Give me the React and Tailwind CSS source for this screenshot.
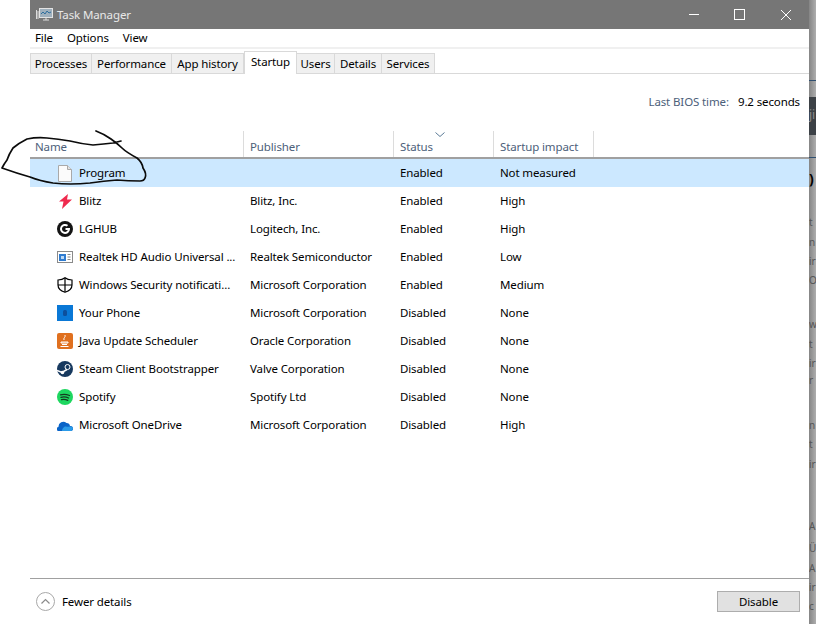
import React from "react";

const F = { fontFamily: '"Noto Sans", sans-serif' };

const Doc = () => (
  <svg width="14" height="17" viewBox="0 0 14 17"><path d="M.5.5h9l4 4v12H.5z" fill="#fbfbfb" stroke="#a9a9a9" /><path d="M9.5.5v4h4" fill="#e4e4e4" stroke="#a9a9a9" /></svg>
);
const Blitz = () => (
  <svg width="13" height="15" viewBox="0 0 13 15"><path d="M9 0 0 7.500h4.500L3 15l10-9.500H8z" fill="#ef2a4e" /></svg>
);
const Lg = () => (
  <svg width="16" height="16" viewBox="0 0 16 16"><circle cx="8" cy="8" r="8" fill="#141414" /><path d="M10.500 4.800A4 4 0 1 0 12 8H8.500" fill="none" stroke="#fff" strokeWidth="2" /></svg>
);
const Realtek = () => (
  <svg width="16" height="12" viewBox="0 0 16 12"><rect x=".5" y=".5" width="15" height="11" fill="#fff" stroke="#8a8a8a" /><rect x="2" y="3" width="7" height="7" fill="#2e7bd0" /><rect x="4" y="5" width="3" height="3" fill="#bcd9f5" /><path d="M10.500 3.500h3M10.500 6h3M10.500 8.500h3" stroke="#888" /></svg>
);
const Shield = () => (
  <svg width="16" height="16" viewBox="0 0 16 16" fill="none" stroke="#000" strokeWidth="1.200"><path d="M8 .8C6 2.500 3.500 3 1 3v5c0 3.500 3 6 7 7.300 4-1.300 7-3.800 7-7.300V3C12.500 3 10 2.500 8 .8z" /><path d="M8 1v14M1 8h14" /></svg>
);
const Phone = () => (
  <svg width="16" height="16" viewBox="0 0 16 16"><rect width="16" height="16" fill="#0a78d6" /><rect x="6" y="5" width="4" height="6" rx="1.500" fill="#0d4f9c" /></svg>
);
const Java = () => (
  <svg width="16" height="16" viewBox="0 0 16 16"><rect width="16" height="16" rx="2" fill="#e0701f" /><path d="M8 2c1 2-2 3-1 5M4 9h7v1H4zM5 11.500h5M3.500 13.500h8" stroke="#fff" fill="none" /></svg>
);
const Steam = () => (
  <svg width="16" height="16" viewBox="0 0 16 16"><circle cx="8" cy="8" r="8" fill="#17395f" /><path d="M0 9.500 5 11.500l5-3" stroke="#fff" strokeWidth="1.500" fill="none" /><circle cx="10.500" cy="6" r="2.500" fill="none" stroke="#fff" /><circle cx="5.500" cy="11.500" r="1.800" fill="#fff" /></svg>
);
const Spotify = () => (
  <svg width="16" height="16" viewBox="0 0 16 16"><circle cx="8" cy="8" r="8" fill="#1ed760" /><path d="M3.500 5.800c3-.8 6-.6 9 .7M4 8.300c2.600-.6 5.200-.4 7.600.7M4.500 10.700c2.200-.5 4.300-.3 6.300.6" fill="none" stroke="#143a20" strokeWidth="1.300" strokeLinecap="round" /></svg>
);
const Cloud = () => (
  <svg width="16" height="11" viewBox="0 0 16 11"><path d="M2 11a2 2 0 0 1-.5-4A4.800 4.800 0 0 1 9.500 3 3.500 3.500 0 0 1 13 6a2.300 2.300 0 0 1 1 5z" fill="#0a64c8" /><path d="M5 11c0-2 2-5 4-4.500s4 0 5 0 2 2 2 2-.5 2.500-2 2.500z" fill="#2b9be8" /></svg>
);

const rows = [
  [Doc, "Program", "", "Enabled", "Not measured"],
  [Blitz, "Blitz", "Blitz, Inc.", "Enabled", "High"],
  [Lg, "LGHUB", "Logitech, Inc.", "Enabled", "High"],
  [Realtek, "Realtek HD Audio Universal ...", "Realtek Semiconductor", "Enabled", "Low"],
  [Shield, "Windows Security notificati...", "Microsoft Corporation", "Enabled", "Medium"],
  [Phone, "Your Phone", "Microsoft Corporation", "Disabled", "None"],
  [Java, "Java Update Scheduler", "Oracle Corporation", "Disabled", "None"],
  [Steam, "Steam Client Bootstrapper", "Valve Corporation", "Disabled", "None"],
  [Spotify, "Spotify", "Spotify Ltd", "Disabled", "None"],
  [Cloud, "Microsoft OneDrive", "Microsoft Corporation", "Disabled", "High"],
];

const tabs = [
  ["Processes", "w-[62px]"],
  ["Performance", "w-[80px]"],
  ["App history", "w-[72px]"],
];
const tabs2 = [
  ["Users", "w-[38px]"],
  ["Details", "w-[47px]"],
  ["Services", "w-[53px]"],
];

const Tab = ({ label, w }) => (
  <div className={`${w} h-[21px] flex items-center justify-center bg-[#f0f0f0] border border-[#d9d9d9] border-l-0 first:border-l text-black`}>{label}</div>
);

const strip = [
  ["t", "h-[20px]"], ["n", "h-[19px]"], ["ir", "h-[19px]"], ["O", "h-[44px]"], ["w", "h-[20px]"], ["t", "h-[19px]"], ["ir", "h-[17px]"], ["r", "h-[45px]"], ["n", "h-[19px]"], ["t", "h-[20px]"], ["ir", "h-[62px]"], ["A", "h-[22px]"], ["Ü", "h-[20px]"], ["A", "h-[19px]"], ["ir", "h-[19px]"], ["c", "h-[14px]"],
];

const scribble = "M96 131 Q104 134 111 139 T122 148 T137 158 Q142 162 143 168 Q147 174 145 178 Q144 181 140 181 Q128 181 117 180 Q104 181 90 183 Q70 185 53 183 Q40 181 30 177 Q16 173 2 168 Q4 164 7 160 Q9 154 13 148 Q19 143 27 139 Q37 137 47 138 Q58 139 70 141 Q82 144 93 145 Q104 144 113 143 L121 141";

export default function App() {
  return (
    <div className="relative w-[816px] h-[624px] overflow-hidden flex bg-white text-[11.5px] tracking-[-0.12px] leading-none" style={F}>
      <div className="w-[30px] bg-white" />
      <div className="w-[779px] flex flex-col h-full">
        <div className="h-[29px] shrink-0 bg-[#767676] flex items-center justify-between text-[#e8e8e8]">
          <div className="flex items-center gap-[4px] pl-[6px]">
            <svg width="17" height="15" viewBox="0 0 17 15" fill="none"><rect x="3.500" y="1.500" width="13" height="9" fill="#9fb0bd" stroke="#e3e3e3" /><path d="M5 7l2-2 2 2 2-3 2 2 2-1" stroke="#2f6f9e" /><path d="M7 13h6M10 11v2M.5 3v9M2 4v8" stroke="#dcdcdc" /></svg>
            <span>Task Manager</span>
          </div>
          <div className="flex items-center">
            <svg className="mr-[35px]" width="10" height="1" viewBox="0 0 10 1"><path d="M0 .5h10" stroke="#fff" /></svg>
            <svg className="mr-[36px]" width="11" height="11" viewBox="0 0 11 11"><rect x=".5" y=".5" width="10" height="10" fill="none" stroke="#fff" /></svg>
            <svg className="mr-[18px]" width="10" height="10" viewBox="0 0 10 10"><path d="M0 0l10 10M10 0L0 10" stroke="#fff" /></svg>
          </div>
        </div>
        <div className="h-[20px] shrink-0 flex items-center gap-[14px] pl-[5px] text-black border-b-2 border-[#f0f0f0]">
          <span>File</span><span>Options</span><span>View</span>
        </div>
        <div className="h-[25px] shrink-0 flex border-b border-[#d9d9d9] pt-[4px]">
          {tabs.map(([l, w]) => <Tab key={l} label={l} w={w} />)}
          <div className="w-[53px] h-[23px] -mt-[2px] flex items-center justify-center bg-white border border-[#d9d9d9] border-b-0 text-black relative z-10 pb-[2px]">Startup</div>
          {tabs2.map(([l, w]) => <Tab key={l} label={l} w={w} />)}
        </div>
        <div className="h-[57px] shrink-0 flex justify-end pt-[22px] pr-[9px]">
          <span className="text-[#4c607a] mr-[9px]">Last BIOS time:</span>
          <span className="text-black">9.2 seconds</span>
        </div>
        <div className="h-[28px] shrink-0 border-b-2 border-[#a0a0a0] flex text-[#4c607a]">
          <div className="w-[214px] pl-[5px] pt-[10px] border-r border-[#dcdcdc]">Name</div>
          <div className="w-[150px] pl-[6px] pt-[10px] border-r border-[#dcdcdc]">Publisher</div>
          <div className="relative w-[100px] pl-[6px] pt-[10px] border-r border-[#dcdcdc]">
            Status
            <svg className="absolute left-[41px] top-[1px]" width="10" height="6" viewBox="0 0 10 6"><path d="M.5.500 5 4.500 9.500.500" fill="none" stroke="#5a7a96" /></svg>
          </div>
          <div className="w-[100px] pl-[6px] pt-[10px] border-r border-[#dcdcdc]">Startup impact</div>
        </div>
        <div className="flex-1 flex flex-col">
          {rows.map(([Icon, name, pub, status, impact], i) => (
            <div key={name} className={`h-[28px] shrink-0 flex items-center text-black ${i === 0 ? "bg-[#cce8ff]" : ""}`}>
              <div className="w-[214px] flex items-center">
                <div className="w-[49px] pl-[21px] flex items-center justify-center"><Icon /></div>
                <span className="whitespace-nowrap">{name}</span>
              </div>
              <div className="w-[150px] pl-[6px] whitespace-nowrap">{pub}</div>
              <div className="w-[100px] pl-[6px]">{status}</div>
              <div className="pl-[6px]">{impact}</div>
            </div>
          ))}
        </div>
        <div className="h-[46px] shrink-0 border-t border-[#a0a0a0] flex items-center justify-between pl-[6px] pr-[9px] text-black">
          <div className="flex items-center gap-[7px]">
            <svg width="19" height="19" viewBox="0 0 19 19" fill="none"><circle cx="9.500" cy="9.500" r="9" stroke="#a8a8a8" /><path d="M5.500 11.500 9.500 7.500l4 4" stroke="#8a8a8a" strokeWidth="1.200" /></svg>
            <span>Fewer details</span>
          </div>
          <div className="w-[83px] h-[21px] flex items-center justify-center bg-[#e1e1e1] border border-[#adadad]">Disable</div>
        </div>
      </div>
      <div className="w-[7px] overflow-hidden bg-gradient-to-r from-[#858585] to-[#aeaeae] flex flex-col text-[10px] text-[#555]">
        <div className="h-[80px] shrink-0" />
        <div className="h-[1px] shrink-0 bg-[#2f4f70]" />
        <div className="h-[16px] shrink-0" />
        <div className="h-[38px] shrink-0 bg-[#3c4146] text-[#8c8c8c] pt-[12px] text-[12px]">ji</div>
        <div className="h-[22px] shrink-0" />
        <div className="h-[1px] shrink-0 bg-[#2f4f70]" />
        <div className="h-[14px] shrink-0" />
        <div className="h-[45px] shrink-0 text-black text-[14px] font-bold">)</div>
        {strip.map(([c, h], i) => <div key={i} className={`${h} shrink-0 whitespace-nowrap`}>{c}</div>)}
      </div>
      <svg className="absolute left-0 top-[125px] pointer-events-none" width="160" height="65" viewBox="0 125 160 65" fill="none">
        <path d={scribble} stroke="#0b0b0b" strokeWidth="1.700" strokeLinecap="round" strokeLinejoin="round" />
      </svg>
    </div>
  );
}
